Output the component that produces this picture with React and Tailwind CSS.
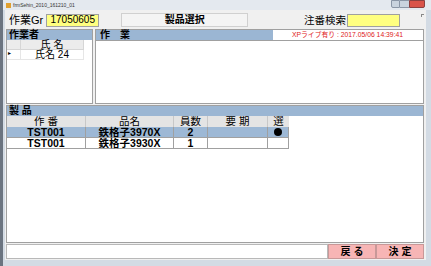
import React from 'react';

const font = { fontFamily: '"Liberation Sans", "Noto Sans CJK JP", sans-serif' };

const products = [
  { no: 'TST001', name: '鉄格子3970X', qty: '2', due: '', sel: true },
  { no: 'TST001', name: '鉄格子3930X', qty: '1', due: '', sel: false },
];

export default function App() {
  return (
    <div
      className="w-[431px] h-[266px] flex flex-col bg-[#d3dbe4] border-l-[3px] border-l-[#6b7480] overflow-hidden text-black"
      style={font}
    >
      {/* title bar */}
      <div className="h-[10px] flex items-center pl-[3px] pr-[6px] bg-[#e4e9ef]">
        <div className="w-[5px] h-[5px] bg-[#e0a030] mr-[2px]" />
        <span className="text-[5px] leading-none text-[#333]">frmSehin_2010_161210_01</span>
        <div className="ml-auto flex h-[8px] self-start">
          <div className="w-[9px] h-full bg-[#c9d3de] border border-[#8a96a6] rounded-bl-[2px]" />
          <div className="w-[9px] h-full bg-[#c9d3de] border-y border-[#8a96a6]" />
          <div className="w-[16px] h-full bg-[#d9534a] border border-[#8a4040] rounded-br-[2px]" />
        </div>
      </div>

      <div className="flex-1 flex flex-col bg-[#f0f0f0] mr-[5px] mb-[6px] ml-[2px] pl-[1px] pr-[2px] pt-[2px]">
        {/* top row */}
        <div className="h-[16px] flex items-center">
          <span className="ml-[3px] text-[11px] leading-none">作業Gr</span>
          <div className="ml-[3px] w-[53px] h-[13px] bg-[#ffff80] border border-[#a0a0a0] flex items-center justify-center text-[10px] leading-none">
            17050605
          </div>
          <div className="ml-[22px] w-[127px] h-[14px] border border-[#d0d0d0] bg-[#f4f4f4] flex items-center justify-center text-[10px] font-bold leading-none">
            製品選択
          </div>
          <span className="ml-auto text-[10.5px] leading-none">注番検索</span>
          <div className="ml-[1px] w-[53px] h-[13px] bg-[#ffff80] border border-[#a0a0a0]" />
          <div className="ml-[21px] w-[3px] h-[3px] border-t border-l border-[#888] self-start mt-[2px]" />
        </div>

        {/* middle row */}
        <div className="h-[75px] flex gap-[2px] mt-[1px]">
          <div className="w-[87px] flex flex-col border border-[#a0a0a0] bg-white">
            <div className="h-[10px] bg-[#9bb6d3] text-[10px] font-bold leading-none flex items-center pl-[2px]">作業者</div>
            <div className="flex h-[10px] text-[10px] leading-none">
              <div className="w-[14px] bg-[#ececec] border-r border-b border-[#d6d6d6]" />
              <div className="w-[63px] bg-[#ececec] border-r border-b border-[#d6d6d6] flex items-center justify-center">氏 名</div>
            </div>
            <div className="flex h-[10px] text-[10px] leading-none">
              <div className="w-[14px] border-r border-b border-[#e6e6e6] text-[6px] pl-[1px]">▸</div>
              <div className="w-[63px] border-r border-b border-[#e6e6e6] flex items-center justify-center">氏名 24</div>
            </div>
          </div>
          <div className="flex-1 flex flex-col border border-[#a0a0a0] bg-white">
            <div className="h-[10px] flex">
              <div className="flex-1 bg-[#9bb6d3] text-[10px] font-bold leading-none flex items-center pl-[4px]">作　業</div>
              <div className="w-[150px] bg-white text-[6.8px] text-[#e02020] leading-none flex items-center pl-[19px]">
                XPライブ有り : 2017.05/06 14:39:41
              </div>
            </div>
            <div className="h-px bg-[#a0a0a0]" />
          </div>
        </div>

        {/* products */}
        <div className="flex-1 flex flex-col border border-[#a0a0a0] bg-white mt-px">
          <div className="h-[10px] bg-[#9bb6d3] text-[10px] font-bold leading-none flex items-center pl-[2px]">製 品</div>
          <div className="flex h-[11px] text-[10.5px] leading-none bg-[#e4e4e4] w-[282px]">
            <div className="w-[79px] border-r border-[#c8c8c8] flex items-center justify-center">作 番</div>
            <div className="w-[88px] border-r border-[#c8c8c8] flex items-center justify-center">品名</div>
            <div className="w-[34px] border-r border-[#c8c8c8] flex items-center justify-center">員数</div>
            <div className="w-[60px] border-r border-[#c8c8c8] flex items-center justify-center">要 期</div>
            <div className="w-[21px] flex items-center justify-center">選</div>
          </div>
          {products.map((p, i) => (
            <div
              key={i}
              className={`flex h-[11px] text-[10.5px] leading-none w-[282px] border-b border-[#a0a0a0] ${p.sel ? 'bg-[#9db8d5]' : 'bg-white'}`}
            >
              <div className="w-[79px] border-r border-[#a0a0a0] flex items-center justify-center font-bold">{p.no}</div>
              <div className="w-[88px] border-r border-[#a0a0a0] flex items-center justify-center font-bold">{p.name}</div>
              <div className="w-[34px] border-r border-[#a0a0a0] flex items-center justify-center font-bold">{p.qty}</div>
              <div className="w-[60px] border-r border-[#a0a0a0] flex items-center justify-center">{p.due}</div>
              <div className="w-[21px] border-r border-[#a0a0a0] flex items-center justify-center">
                {p.sel && <div className="w-[8px] h-[8px] rounded-full bg-black" />}
              </div>
            </div>
          ))}
        </div>

        {/* bottom */}
        <div className="h-[17px] flex items-stretch py-[1px]">
          <div className="flex-1 border border-[#b8b8b8] bg-white" />
          <button className="w-[48px] bg-[#f7b5b5] border border-[#c89898] text-[10px] font-bold leading-none">戻 る</button>
          <button className="w-[48px] bg-[#f7b5b5] border border-[#c89898] text-[10px] font-bold leading-none">決 定</button>
        </div>
      </div>
    </div>
  );
}
